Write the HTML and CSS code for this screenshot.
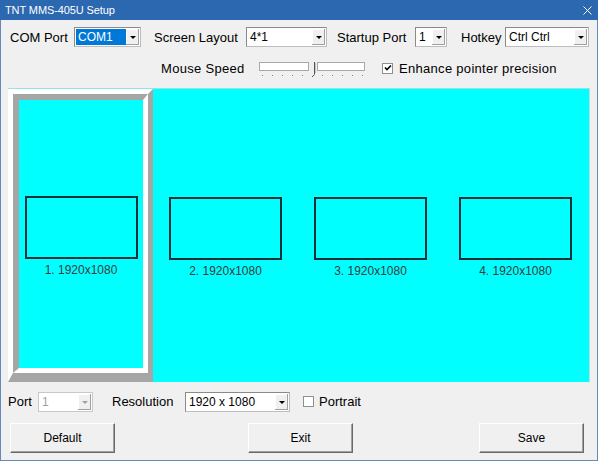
FILE: index.html
```html
<!DOCTYPE html>
<html lang="en">
<head>
  <meta charset="UTF-8" />
  <title>TNT MMS-405U Setup</title>
  <link rel="stylesheet" href="styles.css">
</head>
<body>

  <div class="window">
    <div class="titlebar">
      <span class="title">TNT MMS-405U Setup</span>
      <svg class="close" width="9" height="9" viewBox="0 0 9 9">
        <path d="M0.5 0.5 L8.5 8.5 M8.5 0.5 L0.5 8.5" stroke="#fff" stroke-width="1" fill="none" />
      </svg>
    </div>

    <div class="row row-top">
      <div class="field f-com">
        <span class="label">COM Port</span>
        <div class="combo w-com"><span class="combo-text selected">COM1</span><span class="combo-btn"></span></div>
      </div>
      <div class="field f-layout">
        <span class="label">Screen Layout</span>
        <div class="combo w-layout"><span class="combo-text">4*1</span><span class="combo-btn"></span></div>
      </div>
      <div class="field f-startup">
        <span class="label">Startup Port</span>
        <div class="combo w-startup"><span class="combo-text">1</span><span class="combo-btn"></span></div>
      </div>
      <div class="field f-hotkey">
        <span class="label">Hotkey</span>
        <div class="combo w-hotkey"><span class="combo-text">Ctrl Ctrl</span><span class="combo-btn"></span></div>
      </div>
    </div>

    <div class="row row-mouse">
      <span class="label speed-label">Mouse Speed</span>
      <!-- trackbar: two channel halves, thumb and tick marks -->
      <svg class="slider" width="110" height="18" viewBox="0 0 110 18">
        <rect x="1.5" y="2.5" width="49" height="8" fill="#fff" stroke="#a9a9a9" />
        <rect x="59.5" y="2.5" width="47" height="8" fill="#fff" stroke="#a9a9a9" />
        <path d="M56.5 2 V14.5 L54 17" stroke="#555" fill="none" />
        <path d="M57.5 3 V13" stroke="#c4c4c4" fill="none" />
        <g fill="#808080">
          <rect x="4" y="15" width="1" height="1" />
          <rect x="14" y="15" width="1" height="1" />
          <rect x="24" y="15" width="1" height="1" />
          <rect x="34" y="15" width="1" height="1" />
          <rect x="44" y="15" width="1" height="1" />
          <rect x="64" y="15" width="1" height="1" />
          <rect x="74" y="15" width="1" height="1" />
          <rect x="84" y="15" width="1" height="1" />
          <rect x="94" y="15" width="1" height="1" />
          <rect x="104" y="15" width="1" height="1" />
        </g>
      </svg>
      <span class="check checked">
        <svg width="8" height="8" viewBox="0 0 8 8"><path d="M1 3.5 L3 5.5 L7 1.5" stroke="#000" stroke-width="1.6" fill="none" /></svg>
      </span>
      <span class="label check-label">Enhance pointer precision</span>
    </div>

    <div class="screens">
      <div class="screen active">
        <div class="screen-inner">
          <div class="monitor"></div>
          <div class="caption">1. 1920x1080</div>
        </div>
      </div>
      <div class="screen">
        <div class="monitor"></div>
        <div class="caption">2. 1920x1080</div>
      </div>
      <div class="screen">
        <div class="monitor"></div>
        <div class="caption">3. 1920x1080</div>
      </div>
      <div class="screen">
        <div class="monitor"></div>
        <div class="caption">4. 1920x1080</div>
      </div>
    </div>

    <div class="row row-port">
      <span class="label port-label">Port</span>
      <div class="combo w-port disabled"><span class="combo-text">1</span><span class="combo-btn"></span></div>
      <span class="label res-label">Resolution</span>
      <div class="combo w-res"><span class="combo-text">1920 x 1080</span><span class="combo-btn"></span></div>
      <span class="check"></span>
      <span class="label portrait-label">Portrait</span>
    </div>

    <div class="buttons">
      <button class="btn">Default</button>
      <button class="btn btn-exit">Exit</button>
      <button class="btn btn-save">Save</button>
    </div>
  </div>

</body>
</html>
```

FILE: styles.css
```css
body {
  margin: 0;
  background: #fff;
  font-family: "Liberation Sans", Arial, sans-serif;
  color: #000;
}

.window {
  width: 598px;
  height: 461px;
  box-sizing: border-box;
  background: #f0f0f0;
  border: 1px solid #6589b8;
  border-top: none;
  display: flex;
  flex-direction: column;
}

.titlebar {
  height: 20px;
  margin: 0 -1px;
  background: #2b68b0;
  color: #fff;
  display: flex;
  align-items: center;
  justify-content: space-between;
  padding: 0 6px 0 5px;
}

.title {
  font-size: 11px;
  letter-spacing: -0.1px;
}

.close {
  margin-top: 1px;
}

.row {
  display: flex;
  align-items: center;
}

.label {
  font-size: 13px;
  white-space: nowrap;
}

/* top row: fixed slots so combos line up */
.row-top {
  margin-top: 7px;
  height: 20px;
  padding-left: 9px;
}

.field {
  display: flex;
  align-items: center;
  justify-content: space-between;
}

.f-com { width: 131px; }
.f-layout { width: 173px; margin-left: 13px; }
.f-startup { width: 110px; margin-left: 10px; }
.f-hotkey { width: 128px; margin-left: 14px; }

.combo {
  display: flex;
  height: 20px;
  box-sizing: border-box;
  padding: 1px;
  background: #fff;
  border: 1px solid #8a8a8a;
  border-right-color: #bdbdbd;
  border-bottom-color: #bdbdbd;
}

.w-com { width: 67px; }
.w-layout { width: 81px; }
.w-startup { width: 32px; }
.w-hotkey { width: 84px; }
.w-port { width: 55px; }
.w-res { width: 105px; }

.combo-text {
  flex: 1;
  font-size: 12px;
  line-height: 16px;
  padding-left: 2px;
  overflow: hidden;
  white-space: nowrap;
}

.combo-text.selected {
  background: #0078d7;
  color: #fff;
}

.combo-btn {
  width: 13px;
  background: #f0f0f0;
  box-shadow: inset -1px -1px #a0a0a0, inset 1px 1px #fff;
  display: flex;
  align-items: center;
  justify-content: center;
}

.combo-btn::after {
  content: "";
  border-top: 3px solid #000;
  border-left: 3px solid transparent;
  border-right: 3px solid transparent;
  margin-top: 1px;
}

.combo.disabled {
  border-color: #c9c9c9;
}

.combo.disabled .combo-text {
  color: #a0a0a0;
}

.combo.disabled .combo-btn::after {
  border-top-color: #a0a0a0;
}

/* mouse speed row */
.row-mouse {
  margin-top: 11px;
  height: 20px;
  padding-left: 160px;
}

.speed-label {
  width: 97px;
  letter-spacing: 0.3px;
}

.slider {
  display: block;
  margin-top: 1px;
}

.check {
  width: 9px;
  height: 9px;
  background: #fff;
  border: 1px solid #8f8f8f;
  display: flex;
  align-items: center;
  justify-content: center;
}

.row-mouse .check {
  margin-left: 14px;
}

.check-label {
  margin-left: 6px;
  letter-spacing: 0.3px;
}

/* screen layout panel */
.screens {
  margin: 10px 7px 0;
  height: 294px;
  box-sizing: border-box;
  background: #00ffff;
  border-top: 1px solid #93e4e6;
  border-right: 1px solid #b7dfe1;
  display: flex;
}

.screen {
  width: 145px;
  display: flex;
  flex-direction: column;
  align-items: center;
  justify-content: center;
}

.screen.active {
  box-sizing: border-box;
  border-style: solid;
  border-width: 5px 5px 9px 5px;
  border-color: #fff #a6a6a6 #a6a6a6 #fff;
}

.screen-inner {
  align-self: stretch;
  flex: 1;
  display: flex;
  flex-direction: column;
  align-items: center;
  justify-content: center;
  border-style: solid;
  border-width: 6px 5px 5px 6px;
  border-color: #a6a6a6 #fff #fff #a6a6a6;
}

.monitor {
  width: 113px;
  height: 63px;
  margin-top: 4px;
  box-sizing: border-box;
  border: 2px solid #143236;
}

.caption {
  margin-top: 4px;
  font-size: 12px;
  line-height: 14px;
  color: #3a3a3a;
}

/* port / resolution row */
.row-port {
  margin-top: 9px;
  height: 21px;
  padding-left: 7px;
}

.port-label { width: 30px; }
.res-label { width: 73px; margin-left: 19px; }

.row-port .check {
  margin-left: 13px;
}

.portrait-label {
  margin-left: 5px;
}

/* bottom buttons */
.buttons {
  margin-top: 11px;
  display: flex;
  padding-left: 9px;
}

.btn {
  width: 105px;
  height: 30px;
  font-family: "Liberation Sans", Arial, sans-serif;
  font-size: 12px;
  color: #000;
  background: #f0f0f0;
  border: 1px solid;
  border-color: #fff #696969 #696969 #fff;
  box-shadow: inset -1px -1px #a0a0a0;
  padding: 0;
}

.btn-exit { margin-left: 133px; }
.btn-save { margin-left: 126px; }
```
